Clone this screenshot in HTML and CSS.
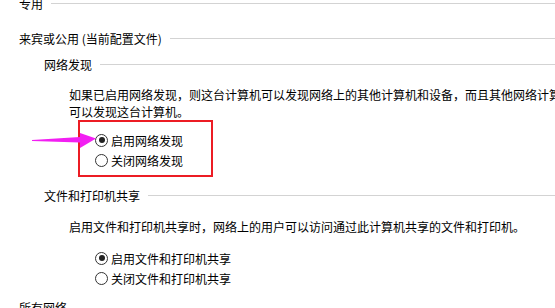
FILE: index.html
```html
<!DOCTYPE html>
<html lang="zh-CN">
<head>
<meta charset="utf-8">
<title>高级共享设置</title>
<link rel="stylesheet" href="styles.css">
</head>
<body>
<div class="page">
  <div class="sec-title sec-first"><span>专用</span></div>
  <div class="sec-title sec-guest"><span>来宾或公用 (当前配置文件)</span></div>

  <div class="sub-title sub-discovery"><span>网络发现</span></div>
  <p class="desc desc-discovery">如果已启用网络发现，则这台计算机可以发现网络上的其他计算机和设备，而且其他网络计算机<br>可以发现这台计算机。</p>

  <div class="highlight">
    <label class="option"><span class="radio checked"></span><span>启用网络发现</span></label>
    <label class="option"><span class="radio"></span><span>关闭网络发现</span></label>
    <svg class="arrow" width="70" height="24" viewBox="0 0 70 24" aria-hidden="true">
      <polygon points="2,12 50,9 50,5 66,10.5 50,20 50,14.5 2,13" fill="#f21ff2"/>
    </svg>
  </div>

  <div class="sub-title sub-sharing"><span>文件和打印机共享</span></div>
  <p class="desc desc-sharing">启用文件和打印机共享时，网络上的用户可以访问通过此计算机共享的文件和打印机。</p>

  <div class="options">
    <label class="option"><span class="radio checked"></span><span>启用文件和打印机共享</span></label>
    <label class="option"><span class="radio"></span><span>关闭文件和打印机共享</span></label>
  </div>

  <div class="sec-title sec-all"><span>所有网络</span></div>
</div>
</body>
</html>
```
FILE: styles.css
```css
html, body {
  margin: 0;
  padding: 0;
}
body {
  width: 555px;
  height: 308px;
  overflow: hidden;
  background: #ffffff;
  color: #000000;
  font-family: "Noto Sans CJK SC", "Microsoft YaHei", sans-serif;
  font-size: 12px;
}
.page {
  padding-left: 19px;
}
.sec-title,
.sub-title {
  display: flex;
  align-items: center;
  gap: 8px;
  height: 20px;
  white-space: nowrap;
}
.sec-title::after,
.sub-title::after {
  content: "";
  flex: 1;
  border-top: 1px solid #d3d3d3;
}
.sec-first {
  margin-top: -7px;
}
.sec-guest {
  margin-top: 15px;
}
.sub-title {
  padding-left: 25px;
}
.sub-discovery {
  margin-top: 6px;
}
.sub-sharing {
  margin-top: 8px;
}
.sec-all {
  margin-top: 9px;
}
.sec-all::after {
  display: none;
}
.desc {
  margin: 0;
  padding-left: 50px;
  line-height: 17px;
  white-space: nowrap;
}
.desc-discovery {
  margin-top: 12px;
}
.desc-sharing {
  margin-top: 13px;
}
.highlight {
  position: relative;
  width: 135px;
  margin-top: 0px;
  margin-left: 59px;
  padding: 8px 0 5px 15px;
  border: 2px solid #ec1c24;
  box-sizing: border-box;
  height: 57px;
}
.options {
  margin-top: 13px;
  padding-left: 76px;
}
.option {
  display: flex;
  align-items: center;
  gap: 3px;
  height: 20px;
  white-space: nowrap;
}
.radio {
  width: 11px;
  height: 11px;
  border: 1px solid #333333;
  border-radius: 50%;
  display: flex;
  align-items: center;
  justify-content: center;
  flex: none;
  background: #ffffff;
}
.radio.checked::before {
  content: "";
  width: 6px;
  height: 6px;
  border-radius: 50%;
  background: #222222;
}
.arrow {
  position: absolute;
  left: -50px;
  top: 6px;
}
```
